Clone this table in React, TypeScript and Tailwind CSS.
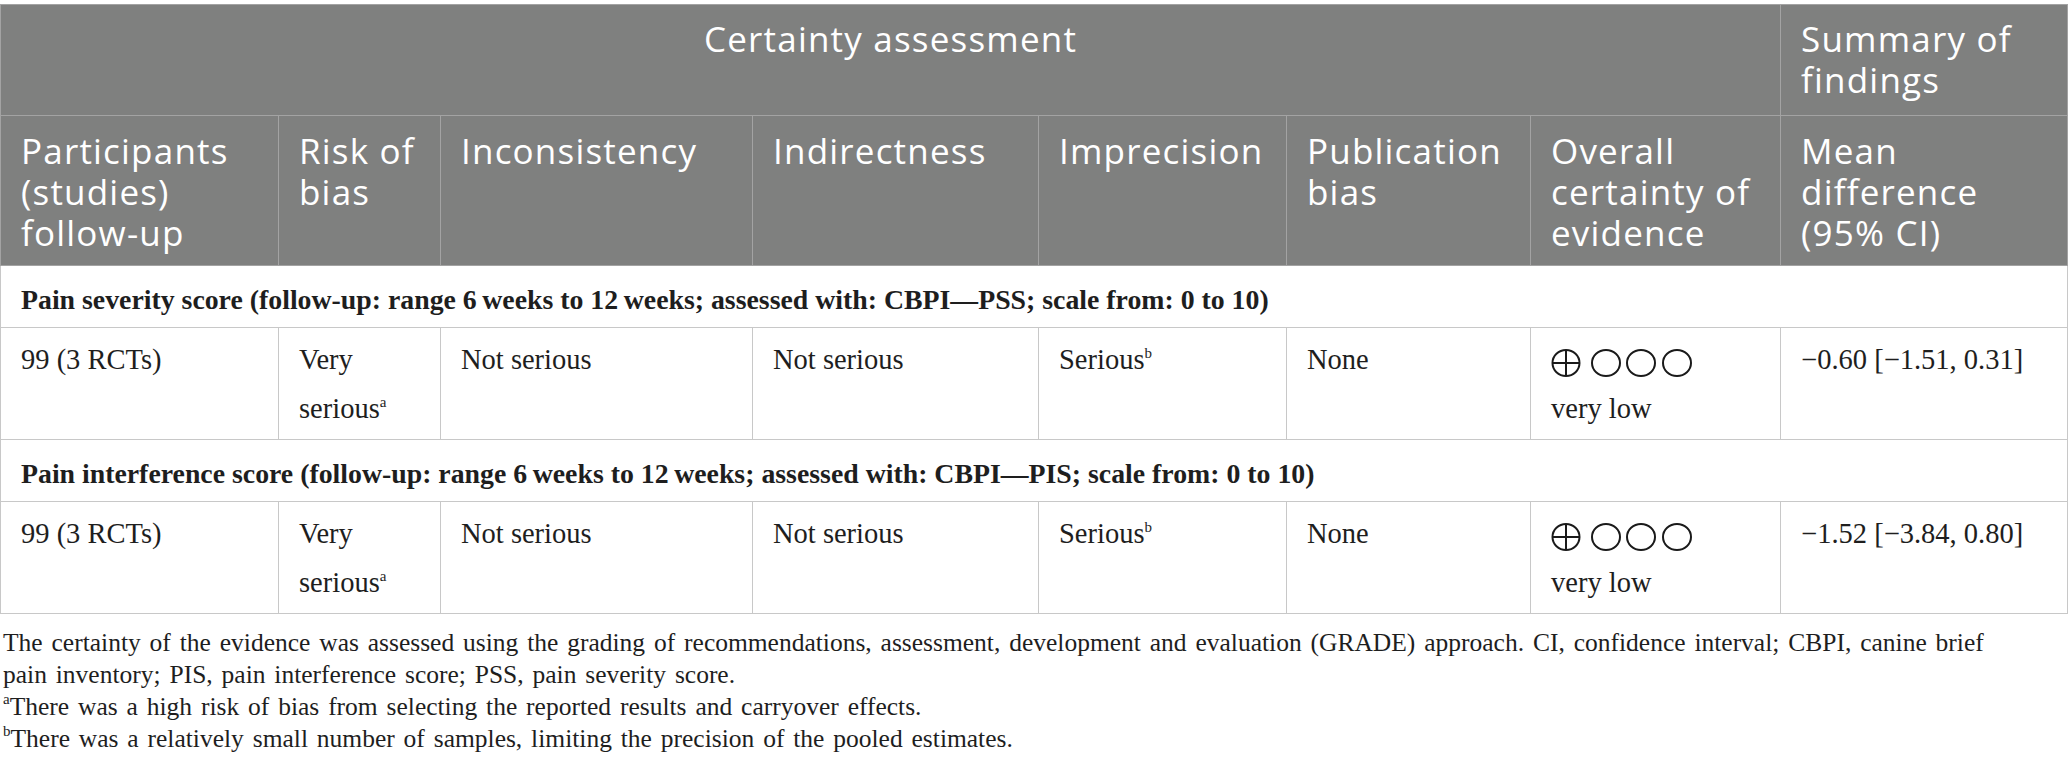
const head = "font-['Open_Sans',sans-serif] text-white text-[35px] leading-[41px] tracking-[1.2px]";
const serif = "font-['Liberation_Serif',serif]";

const hCell = "border border-[#a3a3a3] bg-[#7f807f] align-top px-5 text-left font-normal";
const bCell = "border border-[#c8c8c8] align-top px-5 pt-[7px] pb-[6px] text-left";

const rows = [
    {
        title: "Pain severity score (follow-up: range 6\u2009weeks to 12\u2009weeks; assessed with: CBPI\u2014PSS; scale from: 0 to 10)",
        n: "99 (3 RCTs)",
        md: "\u22120.60 [\u22121.51, 0.31]",
    },
    {
        title: "Pain interference score (follow-up: range 6\u2009weeks to 12\u2009weeks; assessed with: CBPI\u2014PIS; scale from: 0 to 10)",
        n: "99 (3 RCTs)",
        md: "\u22121.52 [\u22123.84, 0.80]",
    },
];

function Sup({ children }: { children: string }) {
    return <span className="relative -top-[11px] text-[15px] leading-none">{children}</span>;
}

function Grade() {
    // one filled (plus) circle, three empty ones
    return (
        <svg width="144" height="30" viewBox="0 0 144 30" className="block" fill="none" stroke="#1a1a1a" strokeWidth="2">
            <ellipse cx="15" cy="15" rx="13.5" ry="13" />
            <line x1="15" y1="2" x2="15" y2="28" />
            <line x1="1.5" y1="15" x2="28.5" y2="15" />
            <ellipse cx="55" cy="15" rx="14" ry="13" />
            <ellipse cx="90" cy="15" rx="14" ry="13" />
            <ellipse cx="126" cy="15" rx="14" ry="13" />
        </svg>
    );
}

export default function App() {
    return (
        <div className="w-[2068px] bg-white pt-[4px]">
            <table className={`w-[2067px] table-fixed border-collapse ${serif} text-[28.5px] leading-[49px] text-[#1e1e1e]`}>
                <colgroup>
                    <col className="w-[278px]" />
                    <col className="w-[162px]" />
                    <col className="w-[312px]" />
                    <col className="w-[286px]" />
                    <col className="w-[248px]" />
                    <col className="w-[244px]" />
                    <col className="w-[250px]" />
                    <col className="w-[287px]" />
                </colgroup>
                <thead className={head}>
                    <tr className="h-[111px]">
                        <th colSpan={7} className={`${hCell} !text-center pt-[13px]`}>
                            Certainty assessment
                        </th>
                        <th className={`${hCell} pt-[13px]`}>
                            Summary of
                            <br />
                            findings
                        </th>
                    </tr>
                    <tr className="h-[150px]">
                        <th className={`${hCell} pt-[14px]`}>
                            Participants
                            <br />
                            (studies)
                            <br />
                            follow-up
                        </th>
                        <th className={`${hCell} pt-[14px]`}>
                            Risk of
                            <br />
                            bias
                        </th>
                        <th className={`${hCell} pt-[14px]`}>Inconsistency</th>
                        <th className={`${hCell} pt-[14px]`}>Indirectness</th>
                        <th className={`${hCell} pt-[14px]`}>Imprecision</th>
                        <th className={`${hCell} pt-[14px]`}>
                            Publication
                            <br />
                            bias
                        </th>
                        <th className={`${hCell} pt-[14px]`}>
                            Overall
                            <br />
                            certainty of
                            <br />
                            evidence
                        </th>
                        <th className={`${hCell} pt-[14px]`}>
                            Mean
                            <br />
                            difference
                            <br />
                            (95% CI)
                        </th>
                    </tr>
                </thead>
                <tbody>
                    {rows.map((r) => (
                        <>
                            <tr key={r.title + "-h"}>
                                <td
                                    colSpan={8}
                                    className="border border-[#c8c8c8] px-5 pt-[9px] pb-[3px] text-[27.8px] font-bold"
                                >
                                    {r.title}
                                </td>
                            </tr>
                            <tr key={r.title}>
                                <td className={bCell}>{r.n}</td>
                                <td className={bCell}>
                                    Very
                                    <br />
                                    serious<Sup>a</Sup>
                                </td>
                                <td className={bCell}>Not serious</td>
                                <td className={bCell}>Not serious</td>
                                <td className={bCell}>
                                    Serious<Sup>b</Sup>
                                </td>
                                <td className={bCell}>None</td>
                                <td className={bCell}>
                                    <div className="h-[49px] pt-[13px]">
                                        <Grade />
                                    </div>
                                    <div>very low</div>
                                </td>
                                <td className={bCell}>{r.md}</td>
                            </tr>
                        </>
                    ))}
                </tbody>
            </table>

            {/* Footnotes */}
            <div className={`${serif} text-[25.5px] leading-[32px] [word-spacing:2.5px] text-[#1e1e1e] pl-[3px] pr-[20px] pt-[13px]`}>
                <p>
                    The certainty of the evidence was assessed using the grading of recommendations, assessment, development and
                    evaluation (GRADE) approach. CI, confidence interval; CBPI, canine brief
                    <br />
                    pain inventory; PIS, pain interference score; PSS, pain severity score.
                </p>
                <p>
                    <Sup>a</Sup>There was a high risk of bias from selecting the reported results and carryover effects.
                </p>
                <p>
                    <Sup>b</Sup>There was a relatively small number of samples, limiting the precision of the pooled estimates.
                </p>
            </div>
        </div>
    );
}
